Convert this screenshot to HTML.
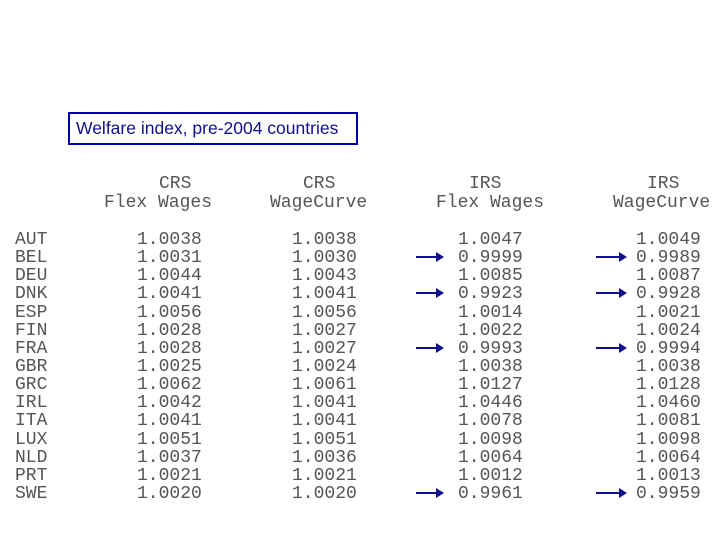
<!DOCTYPE html>
<html><head><meta charset="utf-8"><style>
body{margin:0;width:720px;height:540px;background:#fff;position:relative;overflow:hidden}
.box{position:absolute;left:68px;top:112px;width:280px;height:29px;border:2.5px solid #0000a0;font:17.5px "Liberation Sans",sans-serif;color:#10108a;line-height:29px;padding-left:6px;box-sizing:content-box;white-space:nowrap}
pre{position:absolute;margin:0;font:18px "Liberation Mono",monospace;color:#555;line-height:18.14px;letter-spacing:0}
.ar{position:absolute;height:2px;background:#10108a}
.ar:after{content:"";position:absolute;right:-2px;top:-4px;border-left:8px solid #10108a;border-top:5px solid transparent;border-bottom:5px solid transparent}
</style></head><body>
<div class="box">Welfare index, pre-2004 countries</div>
<pre style="left:159px;top:175px">CRS</pre>
<pre style="left:104px;top:194px">Flex Wages</pre>
<pre style="left:303px;top:175px">CRS</pre>
<pre style="left:270px;top:194px">WageCurve</pre>
<pre style="left:469px;top:175px">IRS</pre>
<pre style="left:436px;top:194px">Flex Wages</pre>
<pre style="left:647px;top:175px">IRS</pre>
<pre style="left:613px;top:194px">WageCurve</pre>
<pre style="left:15px;top:231px">AUT
BEL
DEU
DNK
ESP
FIN
FRA
GBR
GRC
IRL
ITA
LUX
NLD
PRT
SWE</pre>
<pre style="left:137px;top:231px">1.0038
1.0031
1.0044
1.0041
1.0056
1.0028
1.0028
1.0025
1.0062
1.0042
1.0041
1.0051
1.0037
1.0021
1.0020</pre>
<pre style="left:292px;top:231px">1.0038
1.0030
1.0043
1.0041
1.0056
1.0027
1.0027
1.0024
1.0061
1.0041
1.0041
1.0051
1.0036
1.0021
1.0020</pre>
<pre style="left:458px;top:231px">1.0047
0.9999
1.0085
0.9923
1.0014
1.0022
0.9993
1.0038
1.0127
1.0446
1.0078
1.0098
1.0064
1.0012
0.9961</pre>
<pre style="left:636px;top:231px">1.0049
0.9989
1.0087
0.9928
1.0021
1.0024
0.9994
1.0038
1.0128
1.0460
1.0081
1.0098
1.0064
1.0013
0.9959</pre>
<div class="ar" style="left:416px;top:256px;width:26px"></div>
<div class="ar" style="left:416px;top:292px;width:26px"></div>
<div class="ar" style="left:416px;top:347px;width:26px"></div>
<div class="ar" style="left:416px;top:492px;width:26px"></div>
<div class="ar" style="left:596px;top:256px;width:29px"></div>
<div class="ar" style="left:596px;top:292px;width:29px"></div>
<div class="ar" style="left:596px;top:347px;width:29px"></div>
<div class="ar" style="left:596px;top:492px;width:29px"></div>
</body></html>
